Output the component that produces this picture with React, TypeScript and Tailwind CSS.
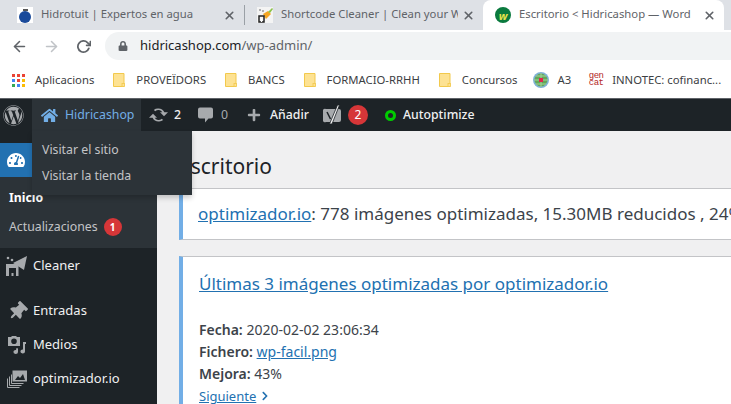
import { FaWordpress, FaHome, FaThumbtack, FaTachometerAlt, FaLock, FaPlus, FaChevronRight } from "react-icons/fa";
import { FiArrowLeft, FiArrowRight, FiRotateCw, FiX } from "react-icons/fi";

const ui = "font-['Noto_Sans','Open_Sans',sans-serif]";

function Folder() {
  return (
    <svg width="12" height="14" viewBox="0 0 12 14" className="shrink-0">
      <path d="M.5.5h10.500v13H.5z" fill="#fde293" stroke="#f2c94c" />
      <rect x="9" y="10.500" width="2.500" height="3" fill="#fde293" stroke="#f2c94c" strokeWidth="0.8" />
    </svg>
  );
}

function AppsGrid() {
  const colors = ["#ea4335", "#ea4335", "#ea4335", "#4285f4", "#ea4335", "#fbbc04", "#34a853", "#4285f4", "#fbbc04"];
  return (
    <div className="grid grid-cols-3 gap-[2px] w-[13px] shrink-0">
      {colors.map((c, i) => (
        <span key={i} className="w-[3px] h-[3px]" style={{ backgroundColor: c }} />
      ))}
    </div>
  );
}

function Tab({
  title,
  icon,
  active,
  width,
  pad,
}: {
  title: string;
  icon: React.ReactNode;
  active?: boolean;
  width: string;
  pad: string;
}) {
  return (
    <div className={`${width} ${pad} h-full flex items-center pr-2 rounded-t-lg shrink-0 ${active ? "bg-white" : ""}`}>
      <span className="w-4 h-4 mr-2 shrink-0 flex items-center justify-center">{icon}</span>
      <span className="flex-1 min-w-0 overflow-hidden whitespace-nowrap text-[11.3px] text-[#5f6368] pb-px">{title}</span>
      <FiX className="text-[#5f6368] text-[13px] ml-1 shrink-0" strokeWidth={3} />
    </div>
  );
}

function Bookmark({ icon, label, gap = "gap-[11px]", className = "" }: { icon: React.ReactNode; label: string; gap?: string; className?: string }) {
  return (
    <div className={`flex items-center ${gap} ${className} whitespace-nowrap text-[11.300px] text-[#3c4043]`}>
      {icon}
      <span>{label}</span>
    </div>
  );
}

function SideItem({ icon, label, h }: { icon: React.ReactNode; label: string; h: string }) {
  return (
    <div className={`flex items-center ${h}`}>
      <span className="w-[33px] flex justify-center shrink-0 text-[#a7aaad] text-[19px] pl-[1px]">{icon}</span>
      <span className="text-[13px] text-[#f0f0f1]">{label}</span>
    </div>
  );
}

export default function App() {
  return (
    <div className={`${ui} w-[731px] h-[404px] overflow-hidden flex flex-col bg-[#f0f0f1] relative`}>
      {/* tabs */}
      <div className="h-[30px] shrink-0 bg-[#dee1e6] flex items-center">
        <Tab
          width="w-[244px]"
          pad="pl-[17px]"
          title="Hidrotuit | Expertos en agua"
          icon={
            <span className="w-4 h-4 bg-white flex flex-col items-center justify-end">
              <span className="w-[5px] h-[2px] bg-[#555]" />
              <span className="w-[12px] h-[12px] rounded-full bg-[#1a4a9a]" />
            </span>
          }
        />
        <div className="w-px h-5 bg-[#9aa0a6] shrink-0" />
        <Tab
          width="w-[238px]"
          pad="pl-3"
          title="Shortcode Cleaner | Clean your W"
          icon={
            <svg width="16" height="16" viewBox="0 0 16 16">
              <rect width="16" height="16" fill="#f4f4f4" />
              <path d="M6 7l5-3 3 3-5 5z" fill="#f5a623" />
              <path d="M11 5l4-4 1 1-3 4z" fill="#8bc34a" />
              <path d="M2 9h5v6H2z" fill="none" stroke="#222" strokeWidth="1.500" />
              <path d="M4 15v-3h1v3z" fill="#fff" />
              <circle cx="3" cy="3" r="1" fill="#999" />
              <circle cx="6" cy="4" r="1" fill="#999" />
            </svg>
          }
        />
        <Tab
          active
          width="w-[241px]"
          pad="pl-3"
          title="Escritorio < Hidricashop — Word"
          icon={
            <span className="w-4 h-4 rounded-full bg-[#0a7a3e] flex items-center justify-center text-[#e3e34a] text-[11px] leading-none font-bold italic">
              w
            </span>
          }
        />
      </div>

      {/* toolbar */}
      <div className="h-[32px] shrink-0 bg-white flex items-center pl-[11px] gap-[15px]">
        <FiArrowLeft className="text-[#5f6368] text-[17px]" strokeWidth={2.2} />
        <FiArrowRight className="text-[#c0c3c7] text-[17px]" strokeWidth={2.2} />
        <span className="w-[17px] flex justify-center">
          <FiRotateCw className="text-[#5f6368] text-[15px]" strokeWidth={2.8} />
        </span>
        <div className="flex-1 h-7 rounded-l-full bg-[#f1f3f4] flex items-center pl-[13px] ml-[-2px]">
          <FaLock className="text-[#5f6368] text-[10px] mr-[12px]" />
          <span className="text-[13px] text-[#202124]">hidricashop.com</span>
          <span className="text-[13px] text-[#5f6368]">/wp-admin/</span>
        </div>
      </div>

      {/* bookmarks */}
      <div className="h-[36px] shrink-0 bg-white flex items-center pl-3 gap-[19px]">
        <Bookmark icon={<AppsGrid />} label="Aplicacions" gap="gap-[10px]" />
        <Bookmark icon={<Folder />} label="PROVEÏDORS" />
        <Bookmark icon={<Folder />} label="BANCS" />
        <Bookmark icon={<Folder />} label="FORMACIO-RRHH" />
        <Bookmark icon={<Folder />} label="Concursos" />
        <Bookmark
          className="ml-[-3px]"
          gap="gap-2"
          icon={
            <svg width="16" height="16" viewBox="0 0 16 16">
              <circle cx="8" cy="8" r="8" fill="#7fb2d6" />
              <circle cx="8" cy="8" r="6.500" fill="#62a85a" />
              <path d="M8 1v14M1 8h14M3 4h10M3 12h10" stroke="#a5d29a" strokeWidth="1" />
              <rect x="6" y="6" width="4" height="4" fill="#e2244c" />
            </svg>
          }
          label="A3"
        />
        <Bookmark
          className="ml-[-2px]"
          gap="gap-2"
          icon={
            <span className="w-[16px] text-[#b3261e] text-[9px] leading-[7px] font-['Liberation_Mono',monospace] text-center tracking-[-0.5px]">
              gen<br />cat
            </span>
          }
          label="INNOTEC: cofinanc..."
        />
      </div>

      <div className="h-px shrink-0 bg-[#5f6368]" />

      {/* admin bar */}
      <div className="h-[32px] shrink-0 bg-[#1d2327] flex items-center text-[12.3px] text-[#f0f0f1]">
        <div className="w-8 flex pl-[3px]">
          <FaWordpress className="text-[#a7aaad] text-[21px]" />
        </div>
        <div className="h-full w-[109px] bg-[#2c3338] flex items-center pl-[9px] gap-[7px] text-[#72aee6]">
          <FaHome className="text-[17px]" />
          <span>Hidricashop</span>
        </div>
        <div className="flex items-center gap-[6px] ml-[8px] w-[33px]">
          <svg width="19" height="16" viewBox="0 0 19 16" fill="#a7aaad">
            <path d="M9.500 1.500a6.500 6.500 0 0 1 5.900 3.800H19l-4 4-4-4h2.300a4.300 4.300 0 0 0-7-1L4.800 2.900A6.500 6.500 0 0 1 9.500 1.500z" />
            <path d="M9.500 14.500a6.500 6.500 0 0 1-5.900-3.800H0l4-4 4 4H5.700a4.300 4.300 0 0 0 7 1l1.500 1.400a6.500 6.500 0 0 1-4.700 1.400z" />
          </svg>
          <span className="font-medium">2</span>
        </div>
        <div className="flex items-center gap-[8px] ml-[16px] w-[32px] text-[#a7aaad]">
          <svg width="15" height="16" viewBox="0 0 15 16" fill="#a7aaad" className="shrink-0">
            <path d="M2 .5h11a2 2 0 0 1 2 2v7a2 2 0 0 1-2 2h-2.500L7 15.500v-4H2a2 2 0 0 1-2-2v-7a2 2 0 0 1 2-2z" />
          </svg>
          <span>0</span>
        </div>
        <div className="flex items-center gap-[9px] ml-[17px] w-[60px]">
          <FaPlus className="text-[#a7aaad] text-[14px] shrink-0" />
          <span className="font-medium">Añadir</span>
        </div>
        <div className="flex items-center gap-[7px] ml-[16px]">
          <svg width="18" height="20" viewBox="0 0 18 20">
            <path d="M3 4h13a2 2 0 0 1 2 2v9a2 2 0 0 1-2 2H3a2 2 0 0 1-3-2V6a2 2 0 0 1 3-2z" fill="#a7aaad" />
            <path d="M4 7l3.500 7" stroke="#1d2327" strokeWidth="1.500" fill="none" />
            <path d="M14.500 0h2L9 19H6.500z" fill="#f0f0f1" stroke="#1d2327" strokeWidth="0.800" />
          </svg>
          <span className="w-5 h-5 rounded-full bg-[#d63638] flex items-center justify-center text-[12px] text-white">2</span>
        </div>
        <div className="flex items-center gap-[7px] ml-[17px]">
          <span className="w-[11px] h-[11px] rounded-full border-[3px] border-[#0c0]" />
          <span className="font-medium">Autoptimize</span>
        </div>
      </div>

      <div className="flex-1 flex min-h-0">
        {/* sidebar */}
        <div className="w-[157px] shrink-0 bg-[#1d2327] flex flex-col pt-3">
          <div className="h-[34px] bg-[#2271b1] flex items-center pl-[7px] text-white text-[18px]">
            <FaTachometerAlt />
          </div>
          <div className="h-[71px] bg-[#2c3338] flex flex-col pt-[7px] pl-[9px] text-[12.3px]">
            <div className="font-bold text-white h-[28px] flex items-center">Inicio</div>
            <div className="flex items-center gap-[6px] text-[#c3c4c7] h-[30px]">
              Actualizaciones
              <span className="w-[18px] h-[18px] rounded-full bg-[#d63638] text-white text-[10px] font-bold flex items-center justify-center">1</span>
            </div>
          </div>
          <div className="flex flex-col pt-[1px]">
            <SideItem
              h="h-[34px] mb-[11px]"
              label="Cleaner"
              icon={
                <svg width="22" height="20" viewBox="0 0 22 20" fill="#a7aaad">
                  <path d="M0 8h12.500v12H0zM3 12v8h2.500v-3h2v3H10v-8z" fillRule="evenodd" />
                  <path d="M7 7L21 0l-3 14z" />
                  <circle cx="2" cy="2" r="1.300" />
                  <circle cx="6" cy="4" r="1.300" />
                </svg>
              }
            />
            <SideItem h="h-[34px]" label="Entradas" icon={<FaThumbtack className="rotate-45" />} />
            <SideItem
              h="h-[34px]"
              label="Medios"
              icon={
                <svg width="20" height="20" viewBox="0 0 20 20" fill="#a7aaad">
                  <path d="M1 2h3l1-1h4l1 1h3v9H1zM7 9a2.800 2.800 0 1 0 0-5.600A2.800 2.800 0 0 0 7 9z" fillRule="evenodd" />
                  <path d="M16 7h3v2h-1v7.500a2.300 2 0 1 1-2-2zM9.500 13a2 2 0 0 1 1.500.5V17a2.300 2 0 1 1-2-2z" />
                </svg>
              }
            />
            <SideItem
              h="h-[34px]"
              label="optimizador.io"
              icon={
                <svg width="20" height="18" viewBox="0 0 20 18" fill="none" stroke="#a7aaad">
                  <rect x="6" y="1" width="13.500" height="10" fill="#a7aaad" />
                  <path d="M8 10l3-4 2 2 3-4 2 6z" fill="#1d2327" stroke="none" />
                  <path d="M4.500 4.500v9h12M2.500 6.500v9h12M.5 8.500v9h12" />
                </svg>
              }
            />
          </div>
        </div>

        {/* content */}
        <div className="flex-1 min-w-0 pl-[22px] flex flex-col">
          <h1 className="text-[21px] leading-[30px] pt-5 h-[57px] shrink-0 text-[#1d2327] font-normal whitespace-nowrap">Escritorio</h1>
          <div className="h-[52px] shrink-0 bg-white border-l-4 border-l-[#72aee6] border-y border-y-[#c3c4c7] pl-[15px] flex items-center text-[17px] text-[#3c434a] whitespace-nowrap overflow-hidden">
            <a className="text-[#2271b1] underline">optimizador.io</a>: 778 imágenes optimizadas, 15.30MB reducidos , 24%
          </div>
          <div className="mt-4 flex-1 bg-white border-l-4 border-l-[#72aee6] border-t border-t-[#c3c4c7] pl-[16px] pt-[14px] text-[#3c434a] whitespace-nowrap">
            <a className="block text-[17px] leading-[26px] text-[#2271b1] underline">Últimas 3 imágenes optimizadas por optimizador.io</a>
            <div className="mt-[22px] text-[14px] leading-[22px]">
              <div><b className="font-semibold">Fecha:</b> 2020-02-02 23:06:34</div>
              <div><b className="font-semibold">Fichero:</b> <a className="text-[#2271b1] underline">wp-facil.png</a></div>
              <div><b className="font-semibold">Mejora:</b> 43%</div>
            </div>
            <a className="flex items-center gap-1 text-[13px] leading-[22px] text-[#2271b1] underline">
              Siguiente <FaChevronRight className="text-[10px]" />
            </a>
          </div>
        </div>
      </div>

      {/* site menu dropdown */}
      <div className="absolute left-8 top-[131px] w-[160px] h-[64px] bg-[#2c3338] shadow-[0_3px_5px_rgba(0,0,0,0.2)] text-[12.3px] text-[#c3c4c7] pl-[10px] pt-[6px] leading-[26px]">
        <div>Visitar el sitio</div>
        <div>Visitar la tienda</div>
      </div>
    </div>
  );
}
